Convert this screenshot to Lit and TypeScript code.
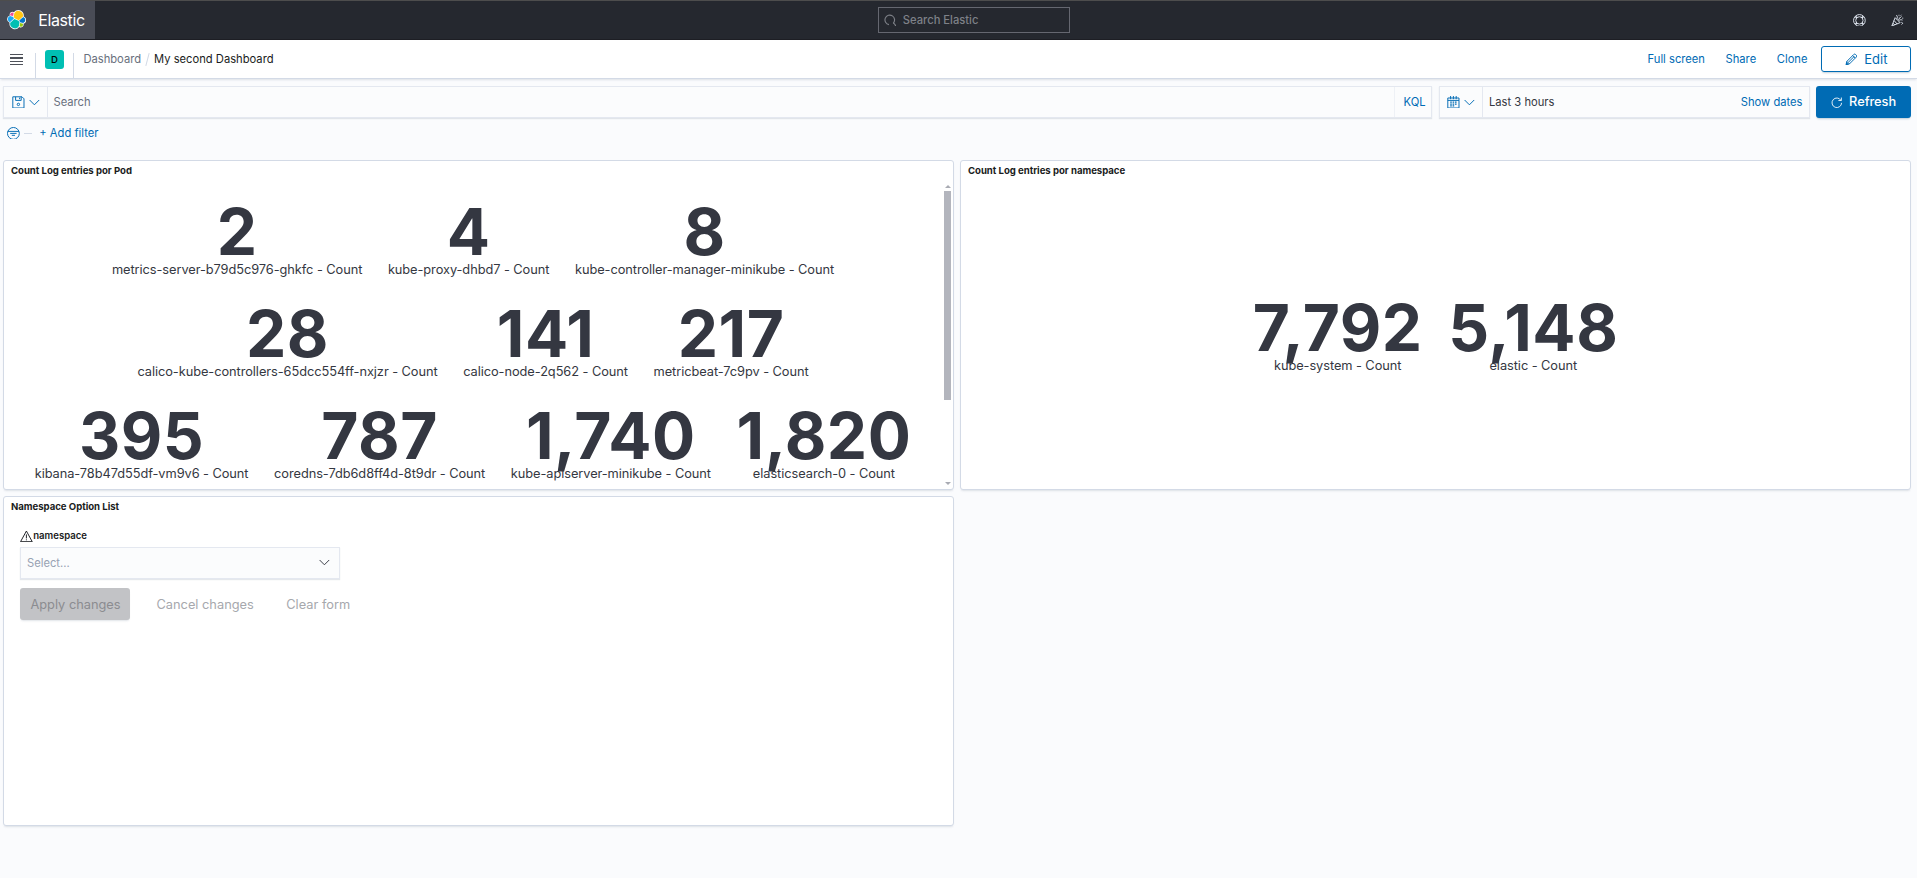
import { LitElement, html, css, svg } from "lit";
import { customElement } from "lit/decorators.js";

interface Metric { value: string; label: string; }

const POD_METRICS: Metric[][] = [
  [
    { value: "2", label: "metrics-server-b79d5c976-ghkfc - Count" },
    { value: "4", label: "kube-proxy-dhbd7 - Count" },
    { value: "8", label: "kube-controller-manager-minikube - Count" },
  ],
  [
    { value: "28", label: "calico-kube-controllers-65dcc554ff-nxjzr - Count" },
    { value: "141", label: "calico-node-2q562 - Count" },
    { value: "217", label: "metricbeat-7c9pv - Count" },
  ],
  [
    { value: "395", label: "kibana-78b47d55df-vm9v6 - Count" },
    { value: "787", label: "coredns-7db6d8ff4d-8t9dr - Count" },
    { value: "1,740", label: "kube-apiserver-minikube - Count" },
    { value: "1,820", label: "elasticsearch-0 - Count" },
  ],
];

const NAMESPACE_METRICS: Metric[][] = [[
  { value: "7,792", label: "kube-system - Count" },
  { value: "5,148", label: "elastic - Count" },
]];

const icon = (body: unknown, size = 12.8) => html`
  <svg class="icon" width=${size} height=${size} viewBox="0 0 16 16" aria-hidden="true">${body}</svg>`;

const chevron = svg`<path class="line" d="M2 5 8 11l6-6"/>`;
const save = svg`<path class="line" d="M1 1h11.500l2.500 2.500V15H1z M4.500 1v4.500h7V1 M9.500 2v2"/><circle class="line" cx="8" cy="10.500" r="1.500"/>`;
const calendar = svg`<path class="line" d="M1 2.500h14V15H1z M1 5.500h14 M4.500 0v4 M8 0v4 M11.500 0v4"/><path fill="currentColor" d="M4 7h2v1.500H4zM7 7h2v1.500H7zM10 7h2v1.500h-2zM4 9.300h2v1.500H4zM7 9.300h2v1.500H7zM10 9.300h2v1.500h-2zM4 11.600h2v1.500H4zM7 11.600h2v1.500H7z"/>`;
const filterIcon = svg`<circle class="line" cx="8" cy="8" r="7.400"/><path class="line" d="M1 5.500h14 M4 8h8 M6 10.400h4"/>`;
const search = svg`<path class="line bold" d="M6.200 13.300A6 6 0 1 1 11.500 11.600 M11.500 11.600 13 12.100 15 15.500"/>`;
const pencil = svg`<path class="line" d="M1.300 14.700l1-4.200 8.600-8.600a1.700 1.700 0 0 1 2.400 0l.8.8a1.700 1.700 0 0 1 0 2.400l-8.600 8.600z M2.300 10.500l3.200 3.200 M4 11.800l7.500-7.500 M9.600 3.200l3.200 3.200"/><path fill="currentColor" d="M1 15l.8-3.600 2.800 2.800z"/>`;
const refresh = svg`<path class="line" d="M13.700 5.200A6.600 6.600 0 1 0 14.600 8.600 M14.300 1.300v4.100h-4.100"/>`;
const warning = svg`<path class="line" d="M8 1.300 15.300 14.600H.7z M8 5.500v5 M8 11.700v1.200"/>`;
const help = svg`<circle class="line" cx="8" cy="8" r="7.300"/><circle class="line" cx="8" cy="8" r="4.600"/><path class="line wide" d="M3 3l2.100 2.100 M13 3l-2.100 2.100 M3 13l2.100-2.100 M13 13l-2.100-2.100"/>`;
const party = svg`<path class="line" d="M1 15 5.200 4.600l6.200 6.200z M3.800 8.200l4 4.400 M2.500 11.400l2.200 2.400 M7 6.600C8.400 5 8.200 3 6.800 1.400 M9.400 8.600c1.200-1.400 3-1.800 5-1 M8.600 7.400 13 3 M10 2.200V1 M12.200 2 13 1 M14 5.200h1.300 M13 10.400l1.800 1.200-1.600 1.600 M10.300 4.200V3.600"/>`;

const logo = html`
  <svg class="icon" width="19.2" height="19.2" viewBox="0 0 32 32" aria-hidden="true">
    <path fill="#fff" d="M32 16.800c0-2.700-1.700-5-4.200-6A9 9 0 0 0 19 0c-2.900 0-5.600 1.400-7.300 3.700a4.700 4.700 0 0 0-7 5.400A6.400 6.400 0 0 0 4.300 21.200 9 9 0 0 0 20.400 28.200a4.700 4.700 0 0 0 7.100-5.300A6.400 6.400 0 0 0 32 16.800"/>
    <path fill="#fec514" d="M12.600 13.800 19.600 17l7-6.200a7.800 7.800 0 0 0-14.200-5.800l-1.200 6.100z"/>
    <path fill="#00bfb3" d="m5.400 21.200a7.900 7.900 0 0 0 14.300 5.900l1.200-6.100-1.600-3L12.300 14.900z"/>
    <path fill="#f04e98" d="m5.400 9.100 4.800 1.100 1-5.400A3.800 3.800 0 0 0 5.400 9.100"/>
    <path fill="#1ba9f5" d="M5 10.200a5.400 5.400 0 0 0-.2 10.100l6.700-6.100-1.200-2.700z"/>
    <path fill="#93c90e" d="m20.900 27.100a3.800 3.800 0 0 0 5.700-4.300l-4.700-1.100z"/>
    <path fill="#0077cc" d="m21.800 20.500 5.200 1.200a5.400 5.400 0 0 0 .2-10.100l-6.800 6z"/>
  </svg>`;

@customElement("app-root")
export class AppRoot extends LitElement {
  static styles = css`
    :host {
      display: flex; flex-direction: column; height: 878px; overflow: hidden;
      background: #fafbfd; color: #343741;
      font-family: Inter, "Liberation Sans", sans-serif; font-size: 11.2px; line-height: 18px;
    }
    * { box-sizing: border-box; }
    .icon { display: block; flex: none; }
    .line { fill: none; stroke: currentColor; stroke-width: 1.2; }
    .bold { stroke-width: 1.4; }
    .wide { stroke-width: 2; }

    .top { display: flex; align-items: stretch; flex: none; height: 40px; background: #25282f; border-top: 1px solid #4d4d4d; border-bottom: 1px solid #1d1e24; color: #dfe5ef; }
    .brand { display: flex; align-items: center; gap: 12.3px; width: 95px; padding: 0 0 1px 6.8px; background: #494c56; font-size: 16px; letter-spacing: -.025em; color: #fff; }
    .brand .icon { margin-top: 1px; }
    .top-mid { flex: 1; display: flex; align-items: center; justify-content: center; }
    .find { display: flex; align-items: center; gap: 6.5px; width: 192px; height: 26px; margin-left: 9px; padding-left: 5px; border: 1px solid #656770; color: #7e8188; font-weight: 500; }
    .top-icons { display: flex; align-items: center; gap: 25px; width: 74px; padding-left: 10px; }

    .nav { display: flex; flex: none; height: 39px; align-items: center; background: #fff; border-bottom: 1px solid #d3dae6; box-shadow: 0 2px 2px -1px rgba(152,162,179,.3); }
    .burger { display: flex; flex-direction: column; gap: 2px; width: 13px; margin: 1px 0 0 10px; }
    .burger i { height: 1.34px; background: #4f525a; }
    .rule { align-self: flex-end; width: 1px; height: 25px; background: #d3dae6; }
    .rule.a { margin-left: 12px; }
    .space { width: 19px; height: 19px; margin: 1px 9px 0; border-radius: 3px; background: #00bfb3; color: #000; font-size: 9.6px; line-height: 19px; text-align: center; font-weight: 500; }
    .crumbs { display: flex; align-items: center; flex: 1; padding: 0 0 0 9.4px; }
    .crumb { color: #69707d; }
    .slash { width: 1px; height: 13px; margin: 0 6px; background: #d3dae6; transform: rotate(15deg); }
    .here { color: #1a1c21; }
    .actions { display: flex; align-items: center; color: #006bb4; }
    .actions .l { margin-right: 20.6px; }
    .edit { display: flex; align-items: center; justify-content: center; gap: 7px; width: 90px; height: 26px; margin: 0 6px 0 -7.1px; border: 1px solid #006bb4; border-radius: 3px; font-size: 13px; box-shadow: 0 2px 2px -1px rgba(54,97,126,.3); }

    .query { display: flex; flex: none; height: 32px; margin: 7px 6px 0 3px; }
    .box { display: flex; align-items: center; background: #fbfcfd; border: 1px solid #e4e8f0; box-shadow: 0 1px 1px rgba(152,162,179,.25); }
    .bar { flex: 1; margin-right: 7px; }
    .pre { display: flex; align-items: center; gap: 3.2px; height: 100%; width: 44px; padding-left: 8px; border-right: 1px solid #e4e8f0; color: #006bb4; }
    .ph { flex: 1; padding-left: 5.5px; color: #69707d; }
    .kql { display: flex; align-items: center; height: 100%; width: 37px; padding: 0 0 1px 8.5px; border-left: 1px solid #eef1f6; color: #006bb4; }
    .dates { width: 371px; margin-right: 6px; }
    .dates .pre { width: 43px; padding-left: 7px; }
    .dates .range { flex: 1; padding-left: 6px; }
    .dates .show { padding-right: 6.5px; color: #006bb4; }
    .refresh { display: flex; align-items: center; gap: 5.5px; width: 95px; padding-left: 15px; border-radius: 3px; background: #006bb4; color: #fff; font-size: 12.8px; font-weight: 500; letter-spacing: -.05px; box-shadow: 0 2px 2px -1px rgba(54,97,126,.3); }
    .refresh .icon { width: 11.6px; margin-right: 1px; }

    .filters { display: flex; align-items: center; flex: none; height: 24px; margin: 3px 0 0 7px; color: #006bb4; }
    .dash { width: 8px; height: 1px; margin: 0 7px 0 4.5px; background: #d3dae6; }

    .grid { display: grid; grid-template-columns: 951px 951px; grid-template-rows: 330px 330px; gap: 6px; margin: 15px 0 0 3px; }
    .panel { display: flex; flex-direction: column; background: #fff; border: 1px solid #d3dae6; border-radius: 3px; box-shadow: 0 2px 2px -1px rgba(152,162,179,.3); min-width: 0; }
    .title { flex: none; height: 22px; padding-left: 7px; font-size: 9.6px; letter-spacing: -.03px; line-height: 19px; font-weight: 700; color: #1a1c21; }
    .body { display: flex; flex: 1; min-height: 0; overflow: hidden; }
    .metrics { flex: 1; display: flex; flex-direction: column; justify-content: center; }
    .pods { justify-content: flex-start; padding: 6px 2px 0 0; }
    .row { display: flex; flex: none; justify-content: center; height: 102px; padding-top: 10.7px; }
    .metric { padding: 0 12.8px; text-align: center; }
    .value { font-size: 64px; line-height: 64px; font-weight: 700; letter-spacing: .5px; }
    .label { font-size: 12.8px; line-height: 20px; margin-top: -3.4px; letter-spacing: -.06px; }
    .scroll { display: flex; flex-direction: column; align-items: center; width: 7px; margin: 0 2px 4px 0; }
    .up, .down { width: 0; height: 0; border: 3px solid transparent; }
    .up { border-top: 0; border-bottom-color: #a9abb3; margin: 2px 0 3px; }
    .down { border-bottom: 0; border-top-color: #a9abb3; margin-top: auto; }
    .thumb { width: 7px; height: 209px; background: #b3b5bd; }

    .form { display: flex; flex-direction: column; padding: 8px 16px; }
    .field { display: flex; align-items: center; gap: .4px; height: 18px; font-size: 9.6px; font-weight: 600; color: #1a1c21; }
    .select { width: 320px; height: 32px; margin-top: 2px; padding: 0 8px 1px 6px; justify-content: space-between; color: #98a2b3; }
    .select .icon { color: #343741; }
    .buttons { display: flex; align-items: center; height: 32px; margin-top: 9px; font-size: 12.8px; line-height: 30px; color: #a6a8ad; }
    .buttons span { padding-top: 2px; }
    .apply { width: 110px; padding-left: 1px; text-align: center; background: #c2c3c6; color: #8b8c90; border-radius: 3px; box-shadow: 0 2px 2px -1px rgba(152,162,179,.3); }
    .cancel { margin-left: 26.5px; }
    .clear { margin-left: 32.5px; }
  `;

  private metrics(rows: Metric[][], cls = "") {
    return html`<div class="metrics ${cls}">
      ${rows.map((r) => html`<div class="row">
        ${r.map((m) => html`<div class="metric"><div class="value">${m.value}</div><div class="label">${m.label}</div></div>`)}
      </div>`)}
    </div>`;
  }

  render() {
    return html`
      <header class="top">
        <div class="brand">${logo}<span>Elastic</span></div>
        <div class="top-mid"><div class="find">${icon(search)}<span>Search Elastic</span></div></div>
        <div class="top-icons">${icon(help)}${icon(party)}</div>
      </header>
      <nav class="nav">
        <div class="burger"><i></i><i></i><i></i><i></i></div>
        <div class="rule a"></div>
        <div class="space">D</div>
        <div class="rule"></div>
        <div class="crumbs"><span class="crumb">Dashboard</span><i class="slash"></i><span class="here">My second Dashboard</span></div>
        <div class="actions"><span class="l">Full screen</span><span class="l">Share</span><span class="l">Clone</span>
          <div class="edit">${icon(pencil)}<span>Edit</span></div></div>
      </nav>
      <div class="query">
        <div class="box bar"><div class="pre">${icon(save)}${icon(chevron)}</div><span class="ph">Search</span><div class="kql">KQL</div></div>
        <div class="box dates"><div class="pre">${icon(calendar)}${icon(chevron)}</div><span class="range">Last 3 hours</span><span class="show">Show dates</span></div>
        <div class="refresh">${icon(refresh)}<span>Refresh</span></div>
      </div>
      <div class="filters">${icon(filterIcon)}<i class="dash"></i><span>+ Add filter</span></div>
      <main class="grid">
        <section class="panel"><div class="title">Count Log entries por Pod</div>
          <div class="body">${this.metrics(POD_METRICS, "pods")}
            <div class="scroll"><i class="up"></i><i class="thumb"></i><i class="down"></i></div></div></section>
        <section class="panel"><div class="title">Count Log entries por namespace</div>
          <div class="body">${this.metrics(NAMESPACE_METRICS)}</div></section>
        <section class="panel"><div class="title">Namespace Option List</div>
          <div class="form">
            <div class="field">${icon(warning)}<span>namespace</span></div>
            <div class="box select"><span>Select...</span>${icon(chevron)}</div>
            <div class="buttons"><span class="apply">Apply changes</span><span class="cancel">Cancel changes</span><span class="clear">Clear form</span></div>
          </div></section>
      </main>`;
  }
}
